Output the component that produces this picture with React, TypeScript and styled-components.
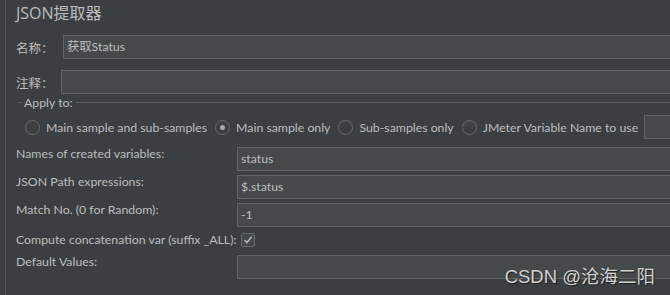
import React from "react";
import styled, { createGlobalStyle } from "styled-components";

const GlobalStyle = createGlobalStyle`
  html, body {
    margin: 0;
    padding: 0;
    background: #3c3f41;
  }
`;

const FONT = `Lato, "Noto Sans CJK SC", sans-serif`;

const Screen = styled.div`
  position: relative;
  width: 670px;
  height: 295px;
  overflow: hidden;
  background: #3c3f41;
  color: #bdbdbd;
  font-family: ${FONT};
  font-size: 12.3px;
`;

const Frame = styled.div`
  margin-left: 5px;
  height: 100%;
  border-left: 1px solid #535658;
  padding-left: 10px;
  box-sizing: border-box;
`;

const Title = styled.div`
  font-family: "Open Sans", "Noto Sans CJK SC", sans-serif;
  font-size: 16px;
  height: 32px;
  line-height: 27px;
`;

const TopRow = styled.div<{ $gap: number }>`
  display: flex;
  align-items: center;
  height: 24px;
  margin-top: ${(p) => p.$gap}px;
`;

const TopLabel = styled.span<{ $w: number }>`
  width: ${(p) => p.$w}px;
  flex: none;
  font-family: "Open Sans", "Noto Sans CJK SC", sans-serif;
  font-size: 12.5px;
`;

const Input = styled.div<{ $w?: number }>`
  box-sizing: border-box;
  height: 24px;
  width: ${(p) => (p.$w ? `${p.$w}px` : "700px")};
  flex: none;
  background: #45494a;
  border: 1px solid #646464;
  padding-left: 3px;
  line-height: 22px;
`;

const Fieldset = styled.div`
  margin-top: -1px;
  margin-left: 2px;
`;

const Legend = styled.div`
  display: flex;
  align-items: center;
  height: 18px;
  &::before {
    content: "";
    width: 4px;
    border-top: 1px solid #5b5e60;
    margin-right: 2px;
  }
  &::after {
    content: "";
    flex: 1;
    border-top: 1px solid #5b5e60;
    margin-left: 3px;
  }
`;

const RadioRow = styled.div`
  display: flex;
  align-items: center;
  height: 28px;
  margin-top: 2px;
  padding-left: 7px;
  white-space: nowrap;
`;

const RadioItem = styled.label`
  display: flex;
  align-items: center;
  margin-right: 8px;
  &:last-of-type {
    margin-right: 6px;
  }
`;

const RadioDot = styled.span<{ $on?: boolean }>`
  box-sizing: border-box;
  width: 15px;
  height: 15px;
  border-radius: 50%;
  border: 1px solid #6a6c6e;
  background: linear-gradient(#3f4344, #393c3d);
  margin-right: 6px;
  display: flex;
  align-items: center;
  justify-content: center;
  &::after {
    content: "";
    display: ${(p) => (p.$on ? "block" : "none")};
    width: 5px;
    height: 5px;
    border-radius: 50%;
    background: #a9abad;
  }
`;

const Form = styled.div`
  display: grid;
  grid-template-columns: 221px auto;
  margin-top: 6px;
`;

const FieldLabel = styled.div<{ $h: number; $top?: number }>`
  height: ${(p) => p.$h}px;
  padding-top: ${(p) => p.$top ?? 0}px;
  line-height: 14px;
  box-sizing: border-box;
  white-space: nowrap;
`;

const FieldCell = styled.div<{ $h: number; $top?: number }>`
  height: ${(p) => p.$h}px;
  padding-top: ${(p) => p.$top ?? 0}px;
  box-sizing: border-box;
`;

const Check = styled.span`
  box-sizing: border-box;
  display: flex;
  align-items: center;
  justify-content: center;
  width: 14px;
  height: 14px;
  margin-left: 4px;
  border: 1px solid #6a6c6e;
  border-radius: 2px;
  background: #43494a;
`;

const Watermark = styled.div`
  position: absolute;
  right: 15px;
  top: 262px;
  font-family: "Liberation Sans", "Noto Sans CJK SC", sans-serif;
  font-size: 18.5px;
  color: #d2d2d2;
  text-shadow: 1px 1px 1px #1e1e1e;
`;

const fields = [
  { label: "Names of created variables:", value: "status" },
  { label: "JSON Path expressions:", value: "$.status" },
  { label: "Match No. (0 for Random):", value: "-1" },
];

export default function App() {
  return (
    <>
      <GlobalStyle />
      <Screen>
        <Frame>
          <Title>JSON提取器</Title>
          <TopRow $gap={3}>
            <TopLabel $w={47}>名称：</TopLabel>
            <Input>获取Status</Input>
          </TopRow>
          <TopRow $gap={11}>
            <TopLabel $w={45}>注释：</TopLabel>
            <Input />
          </TopRow>
          <Fieldset>
            <Legend>Apply to:</Legend>
            <RadioRow>
              <RadioItem>
                <RadioDot />
                Main sample and sub-samples
              </RadioItem>
              <RadioItem>
                <RadioDot $on />
                Main sample only
              </RadioItem>
              <RadioItem>
                <RadioDot />
                Sub-samples only
              </RadioItem>
              <RadioItem>
                <RadioDot />
                JMeter Variable Name to use
              </RadioItem>
              <Input $w={60} />
            </RadioRow>
          </Fieldset>
          <Form>
            {fields.map((f) => (
              <React.Fragment key={f.label}>
                <FieldLabel $h={28}>{f.label}</FieldLabel>
                <FieldCell $h={28}>
                  <Input>{f.value}</Input>
                </FieldCell>
              </React.Fragment>
            ))}
            <FieldLabel $h={24} $top={2}>
              Compute concatenation var (suffix _ALL):
            </FieldLabel>
            <FieldCell $h={24} $top={2}>
              <Check>
                <svg width="10" height="10" viewBox="0 0 10 10">
                  <path d="M1.5 5.2 L4 7.6 L8.6 1.8" fill="none" stroke="#b0b2b4" strokeWidth="1.6" />
                </svg>
              </Check>
            </FieldCell>
            <FieldLabel $h={28}>Default Values:</FieldLabel>
            <FieldCell $h={28}>
              <Input />
            </FieldCell>
          </Form>
        </Frame>
        <Watermark>CSDN @沧海二阳</Watermark>
      </Screen>
    </>
  );
}
